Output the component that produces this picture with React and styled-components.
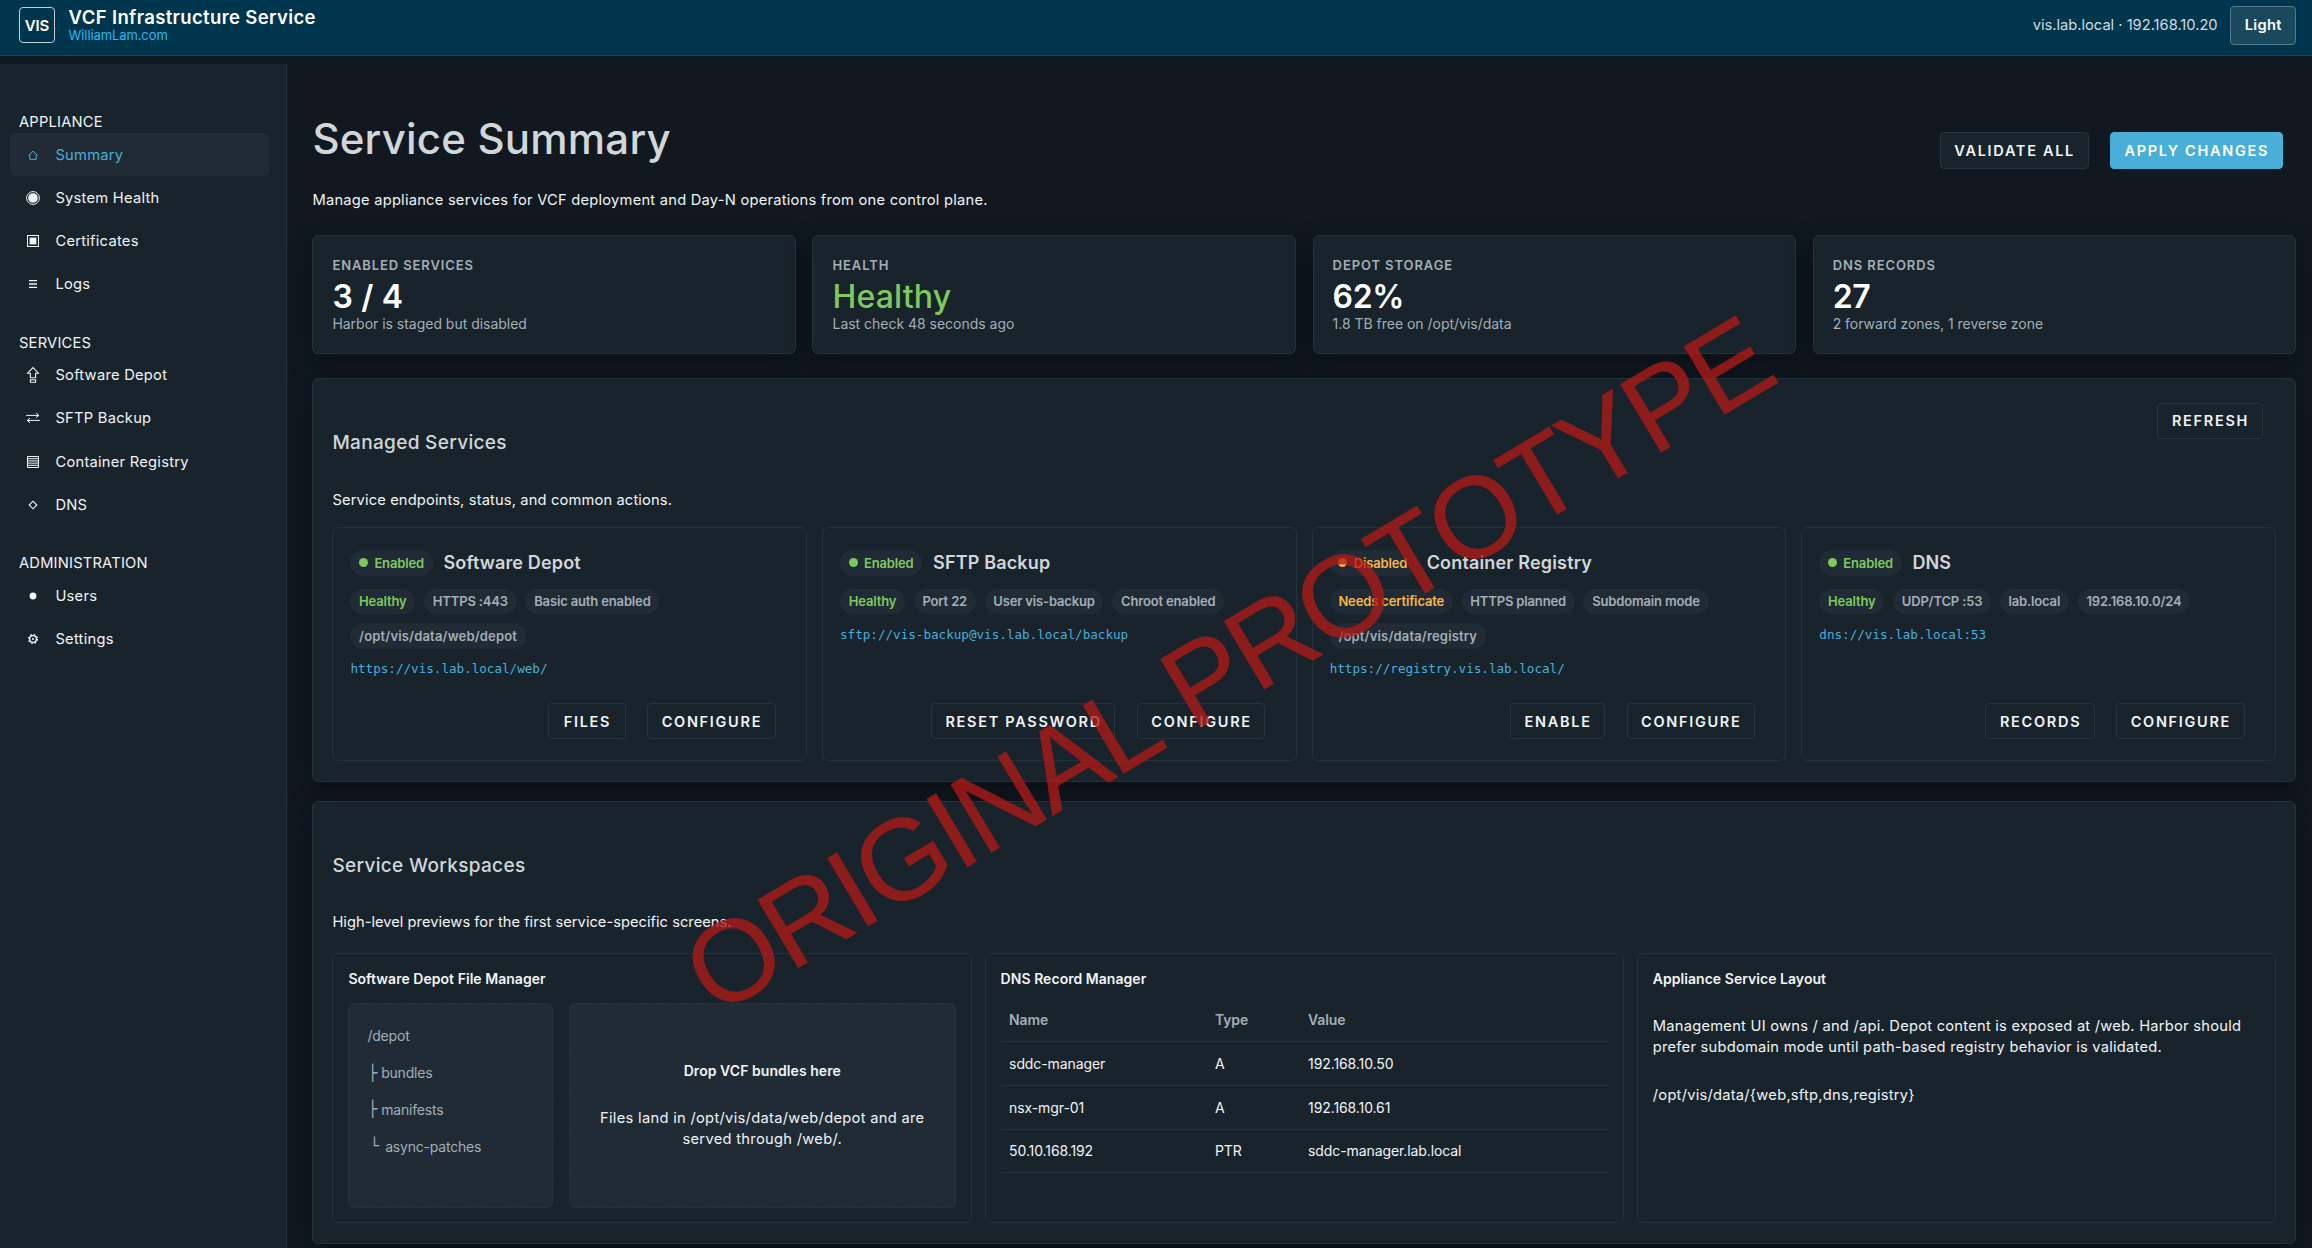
import React from 'react';
import styled, { createGlobalStyle } from 'styled-components';

const c = {
  bg: '#11181f',
  header: '#00364d',
  surface: '#19232c',
  raised: '#202b36',
  line: '#22313b',
  text: '#f1f4f5',
  heading: '#d1d6d9',
  muted: '#a3aeb7',
  blue: '#49afd9',
  green: '#7dc95e',
  amber: '#f7b744',
};

const GlobalStyle = createGlobalStyle`
  * { box-sizing: border-box; }
  body {
    margin: 0;
    background: ${c.bg};
    color: ${c.text};
    font-family: Inter, "Open Sans", sans-serif;
    font-size: 14.7px;
    letter-spacing: 0.2px;
  }
  h1, h2, h3, h4, p { margin: 0; }
`;

const Page = styled.div`
  position: relative;
  width: 2312px;
  height: 1248px;
  overflow: hidden;
  background: ${c.bg};
`;

/* Header */
const Header = styled.header`
  height: 56px;
  padding: 6px 16px 0 19px;
  display: flex;
  justify-content: space-between;
  align-items: flex-start;
  background: ${c.header};
  border-bottom: 1px solid #1a4560;
`;
const HeaderGroup = styled.div`
  display: flex;
  align-items: center;
  gap: ${(p) => p.$gap}px;
  height: 38.5px;
`;
const Logo = styled.div`
  width: 36px;
  height: 36px;
  border: 1.5px solid #c3cdd3;
  border-radius: 4px;
  display: grid;
  place-items: center;
  font-size: 15px;
  font-weight: 600;
  letter-spacing: -0.1px;
  color: #fff;
`;
const BrandName = styled.div`
  font-size: 18.5px;
  line-height: 20px;
  font-weight: 600;
  letter-spacing: 0.36px;
  color: #fff;
`;
const BrandLink = styled.div`
  font-size: 13px;
  line-height: 16px;
  letter-spacing: -0.1px;
  color: #29b6ef;
`;
const Host = styled.span`
  color: #d3dbe0;
  letter-spacing: -0.01px;
`;
const ThemeButton = styled.button`
  height: 38.5px;
  width: 65.7px;
  padding: 0;
  border: 1px solid #55798a;
  border-radius: 4px;
  background: #1a495e;
  color: #fff;
  font: 600 14.7px Inter, sans-serif;
  letter-spacing: 0.3px;
`;

/* Shell */
const Body = styled.div`
  display: flex;
  height: 1192px;
`;
const Sidebar = styled.nav`
  width: 287px;
  flex: none;
  margin-top: 8px;
  padding: 47px 17px 0 10px;
  background: ${c.surface};
  border-right: 1px solid #26343e;
  display: flex;
  flex-direction: column;
  gap: 25.8px;
`;
const NavLabel = styled.div`
  line-height: 22px;
  padding-left: 9px;
`;
const NavItem = styled.div`
  height: 43.2px;
  display: flex;
  align-items: center;
  gap: 13.4px;
  padding-left: 14px;
  border-radius: 5px;
  letter-spacing: 0.26px;
  color: ${(p) => (p.$active ? c.blue : c.text)};
  background: ${(p) => (p.$active ? c.raised : 'transparent')};
`;
const Glyph = styled.svg`
  width: 18px;
  height: 18px;
  flex: none;
  fill: none;
  stroke: currentColor;
  stroke-width: 1;
`;
const Main = styled.main`
  flex: 1;
  padding: 58px 16px 0 25.4px;
  display: flex;
  flex-direction: column;
`;

/* Page heading */
const PageHead = styled.div`
  display: flex;
  justify-content: space-between;
  align-items: flex-start;
`;
const PageTitle = styled.h1`
  font-size: 42px;
  line-height: 50px;
  font-weight: 450;
  letter-spacing: 0.2px;
  color: ${c.heading};
`;
const PageLead = styled.p`
  margin: 25.3px 0 23.7px;
  line-height: 22px;
  letter-spacing: 0.235px;
`;
const Actions = styled.div`
  display: flex;
  gap: 21.4px;
  justify-content: flex-end;
  margin-top: ${(p) => p.$top || 'auto'};
  margin-right: 13.4px;
`;
const Button = styled.button`
  height: 36.5px;
  min-width: 77.7px;
  padding: 0 12.5px 0 13.5px;
  border: 1px solid ${(p) => (p.$primary ? c.blue : '#26343e')};
  border-radius: 4px;
  background: ${(p) => (p.$primary ? c.blue : c.surface)};
  color: ${(p) => (p.$primary ? '#fff' : c.text)};
  font: 600 14.5px Inter, sans-serif;
  letter-spacing: 1.7px;
  white-space: nowrap;
`;

/* Stats */
const Surface = styled.section`
  background: ${c.surface};
  border: 1px solid ${c.line};
  border-radius: 6px;
  box-shadow: 0 8px 24px rgba(4, 6, 14, 0.45);
`;
const Stats = styled.div`
  display: grid;
  grid-template-columns: repeat(4, 1fr);
  gap: 16.8px;
`;
const Stat = styled(Surface)`
  height: 119.4px;
  padding: 21.2px 19px 0;
`;
const StatLabel = styled.div`
  font-size: 13px;
  line-height: 16px;
  font-weight: 600;
  letter-spacing: 0.9px;
  color: ${c.muted};
`;
const StatValue = styled.div`
  margin-top: 8px;
  font-size: 32px;
  line-height: 32px;
  font-weight: ${(p) => (p.$good ? 500 : 600)};
  letter-spacing: ${(p) => (p.$good ? 0.15 : -0.4)}px;
  word-spacing: ${(p) => (p.$good ? 0 : 1.2)}px;
  color: ${(p) => (p.$good ? c.green : '#fff')};
`;
const StatNote = styled.div`
  font-size: 14px;
  line-height: 20px;
  margin-top: 0.6px;
  letter-spacing: -0.02px;
  color: ${c.muted};
`;

/* Panels */
const Panel = styled(Surface)`
  margin-top: ${(p) => p.$top}px;
  padding: 0 19px 20px;
`;
const PanelHead = styled.div`
  display: flex;
  justify-content: space-between;
  align-items: flex-start;
  padding-bottom: ${(p) => p.$bottom}px;
`;
const PanelTitle = styled.h2`
  padding-top: 52.4px;
  font-size: 19px;
  line-height: 24px;
  font-weight: 500;
  letter-spacing: 0.33px;
  color: ${c.heading};
`;
const PanelLead = styled.p`
  margin-top: 33.3px;
  line-height: 22px;
  letter-spacing: ${(p) => (p.$tight ? '0.02px' : '0.14px')};
`;
const Grid = styled.div`
  display: grid;
  grid-template-columns: repeat(${(p) => p.$cols}, 1fr);
  gap: ${(p) => p.$gap}px;
`;

/* Service cards */
const Service = styled.article`
  height: 234px;
  padding: 21.3px 17px 21px;
  border: 1px solid ${c.line};
  border-radius: 6px;
  display: flex;
  flex-direction: column;
`;
const ServiceHead = styled.div`
  display: flex;
  align-items: center;
  gap: 10.8px;
  margin-bottom: 13px;
`;
const ServiceName = styled.h3`
  font-size: 18px;
  line-height: 26px;
  font-weight: 600;
  letter-spacing: 0.16px;
  color: ${c.heading};
`;
const tones = { good: c.green, warn: c.amber };
const Pill = styled.span`
  display: inline-flex;
  align-items: center;
  height: ${(p) => (p.$status ? 26 : 25.7)}px;
  padding: 0 8.7px;
  border-radius: 13px;
  background: ${c.raised};
  color: ${(p) => tones[p.$tone] || c.muted};
  font-size: 13px;
  font-weight: 600;
  letter-spacing: ${(p) => (p.$path ? 0.17 : -0.15)}px;
`;
const Dot = styled.i`
  width: 9px;
  height: 9px;
  margin-right: 6.3px;
  border-radius: 50%;
  background: currentColor;
`;
const Pills = styled.div`
  display: flex;
  flex-wrap: wrap;
  gap: 8.8px;
`;
const Endpoint = styled.a`
  margin-top: 10.4px;
  font: 12.6px/20px "DejaVu Sans Mono", monospace;
  letter-spacing: 0;
  color: ${c.blue};
`;

/* Workspaces */
const Workspace = styled.article`
  height: 270.4px;
  padding: 16px 15px 0;
  border: 1px solid ${c.line};
  border-radius: 6px;
`;
const WorkspaceTitle = styled.h4`
  font-size: 14px;
  line-height: 18px;
  font-weight: 600;
  letter-spacing: 0.04px;
`;
const FileManager = styled.div`
  display: grid;
  grid-template-columns: 204.5px 1fr;
  gap: 16px;
  height: 205.4px;
  margin-top: 15px;
`;
const Well = styled.div`
  border: 1px dashed #273540;
  border-radius: 6px;
  background: ${c.raised};
`;
const Tree = styled(Well)`
  padding: 14px 18px 0;
  font-size: 14px;
  letter-spacing: -0.2px;
  color: ${c.muted};
`;
const TreeRow = styled.div`
  height: 36.7px;
  display: flex;
  align-items: center;
  padding-left: ${(p) => p.$indent || 0}px;
`;
const Branch = styled.span`
  width: ${(p) => p.$w}px;
  font: 15.5px "DejaVu Sans Mono", monospace;
`;
const DropZone = styled(Well)`
  display: flex;
  flex-direction: column;
  align-items: center;
  justify-content: center;
  gap: 26px;
  padding: 0 24px;
  text-align: center;
  line-height: 21.5px;
  letter-spacing: 0.3px;
`;
const DropTitle = styled.strong`
  font-size: 14px;
  font-weight: 600;
  letter-spacing: 0.05px;
`;
const Table = styled.table`
  width: 607px;
  margin-top: 10.2px;
  border-collapse: collapse;
  table-layout: fixed;
  font-size: 14px;
  letter-spacing: -0.1px;
  th, td {
    height: 43.75px;
    padding: 0 8.5px;
    text-align: left;
    border-bottom: 1px solid ${c.line};
  }
  th { font-weight: 600; color: ${c.muted}; }
  th:nth-child(1) { width: 205.8px; }
  th:nth-child(2) { width: 93.2px; }
`;
const Note = styled.p`
  margin-top: ${(p) => p.$top}px;
  line-height: 21.7px;
  letter-spacing: 0.24px;
`;

const Watermark = styled.div`
  position: absolute;
  left: 716px;
  top: 919.8px;
  transform-origin: 0 97.3px;
  transform: rotate(-30.86deg);
  font: 115px/1 "Liberation Sans", Arial, sans-serif;
  font-kerning: none;
  letter-spacing: -2.85px;
  white-space: nowrap;
  color: #b01b17;
  -webkit-text-stroke: 0.5px #b01b17;
  opacity: 0.77;
  pointer-events: none;
`;

const icons = {
  home: <path d="M4.6 9.4 9 5.2l4.4 4.2M5.8 8.6v4.7h6.4V8.6" />,
  health: <><circle cx="9" cy="9" r="6.4" /><circle cx="9" cy="9" r="4.8" fill="currentColor" stroke="none" /></>,
  cert: <><rect x="3.5" y="3.5" width="11" height="11" /><rect x="5.6" y="5.6" width="6.8" height="6.8" fill="currentColor" stroke="none" /></>,
  logs: <path d="M5 5.6h8M5 9h8M5 12.4h8" strokeWidth="1.4" />,
  upload: <path d="M9 1.6 14.4 7.2h-2.8v4.6H6.4V7.2H3.6zM6.4 13.8h5.2v2.4H6.4z" strokeWidth="1.1" />,
  swap: <path d="M2.2 6.4h12.6M12 3.9l2.8 2.5L12 8.6M15.8 11.4H3.2M6 9.2l-2.8 2.2L6 13.8" />,
  registry: <path d="M3.5 3.5h11v11h-11zM4 5.7h10M4 7.9h10M4 10.1h10M4 12.3h10" />,
  diamond: <path d="M9 5.2 12.8 9 9 12.8 5.2 9z" strokeWidth="1.1" />,
  user: <circle cx="9" cy="9" r="3.4" fill="currentColor" stroke="none" />,
  gear: <><circle cx="9" cy="9" r="3.4" strokeWidth="1.4" /><circle cx="9" cy="9" r="4.5" strokeWidth="1.1" strokeDasharray="1.77 1.77" /><circle cx="9" cy="9" r="1.1" fill="currentColor" stroke="none" /></>,
};

const nav = [
  ['APPLIANCE', [['home', 'Summary', true], ['health', 'System Health'], ['cert', 'Certificates'], ['logs', 'Logs']]],
  ['SERVICES', [['upload', 'Software Depot'], ['swap', 'SFTP Backup'], ['registry', 'Container Registry'], ['diamond', 'DNS']]],
  ['ADMINISTRATION', [['user', 'Users'], ['gear', 'Settings']]],
];

const stats = [
  ['ENABLED SERVICES', '3 / 4', 'Harbor is staged but disabled'],
  ['HEALTH', 'Healthy', 'Last check 48 seconds ago', true],
  ['DEPOT STORAGE', '62%', '1.8 TB free on /opt/vis/data'],
  ['DNS RECORDS', '27', '2 forward zones, 1 reverse zone'],
];

const services = [
  { name: 'Software Depot', on: true, health: 'Healthy', tags: ['HTTPS :443', 'Basic auth enabled', '/opt/vis/data/web/depot'], url: 'https://vis.lab.local/web/', action: 'FILES' },
  { name: 'SFTP Backup', on: true, health: 'Healthy', tags: ['Port 22', 'User vis-backup', 'Chroot enabled'], url: 'sftp://vis-backup@vis.lab.local/backup', action: 'RESET PASSWORD' },
  { name: 'Container Registry', on: false, health: 'Needs certificate', tags: ['HTTPS planned', 'Subdomain mode', '/opt/vis/data/registry'], url: 'https://registry.vis.lab.local/', action: 'ENABLE' },
  { name: 'DNS', on: true, health: 'Healthy', tags: ['UDP/TCP :53', 'lab.local', '192.168.10.0/24'], url: 'dns://vis.lab.local:53', action: 'RECORDS' },
];

const records = [
  ['sddc-manager', 'A', '192.168.10.50'],
  ['nsx-mgr-01', 'A', '192.168.10.61'],
  ['50.10.168.192', 'PTR', 'sddc-manager.lab.local'],
];

function ServiceCard({ name, on, health, tags, url, action }) {
  const tone = on ? 'good' : 'warn';
  return (
    <Service>
      <ServiceHead>
        <Pill $status $tone={tone}><Dot />{on ? 'Enabled' : 'Disabled'}</Pill>
        <ServiceName>{name}</ServiceName>
      </ServiceHead>
      <Pills>
        <Pill $tone={tone}>{health}</Pill>
        {tags.map((t) => <Pill key={t} $path={t.startsWith('/')}>{t}</Pill>)}
      </Pills>
      <Endpoint>{url}</Endpoint>
      <Actions>
        <Button>{action}</Button>
        <Button>CONFIGURE</Button>
      </Actions>
    </Service>
  );
}

export default function App() {
  return (
    <Page>
      <GlobalStyle />
      <Header>
        <HeaderGroup $gap={13.6}>
          <Logo>VIS</Logo>
          <div>
            <BrandName>VCF Infrastructure Service</BrandName>
            <BrandLink>WilliamLam.com</BrandLink>
          </div>
        </HeaderGroup>
        <HeaderGroup $gap={12.7}>
          <Host>vis.lab.local · 192.168.10.20</Host>
          <ThemeButton>Light</ThemeButton>
        </HeaderGroup>
      </Header>
      <Body>
        <Sidebar>
          {nav.map(([label, items]) => (
            <div key={label}>
              <NavLabel>{label}</NavLabel>
              {items.map(([icon, text, active]) => (
                <NavItem key={text} $active={active}>
                  <Glyph viewBox="0 0 18 18">{icons[icon]}</Glyph>
                  {text}
                </NavItem>
              ))}
            </div>
          ))}
        </Sidebar>
        <Main>
          <PageHead>
            <div>
              <PageTitle>Service Summary</PageTitle>
              <PageLead>Manage appliance services for VCF deployment and Day-N operations from one control plane.</PageLead>
            </div>
            <Actions $top="18.3px">
              <Button>VALIDATE ALL</Button>
              <Button $primary>APPLY CHANGES</Button>
            </Actions>
          </PageHead>
          <Stats>
            {stats.map(([label, value, note, good]) => (
              <Stat key={label}>
                <StatLabel>{label}</StatLabel>
                <StatValue $good={good}>{value}</StatValue>
                <StatNote>{note}</StatNote>
              </Stat>
            ))}
          </Stats>
          <Panel $top={23.6}>
            <PanelHead $bottom={16.7}>
              <div>
                <PanelTitle>Managed Services</PanelTitle>
                <PanelLead>Service endpoints, status, and common actions.</PanelLead>
              </div>
              <Actions $top="23.7px"><Button>REFRESH</Button></Actions>
            </PanelHead>
            <Grid $cols={4} $gap={15}>
              {services.map((s) => <ServiceCard key={s.name} {...s} />)}
            </Grid>
          </Panel>
          <Panel $top={18.3}>
            <PanelHead $bottom={19.3}>
              <div>
                <PanelTitle>Service Workspaces</PanelTitle>
                <PanelLead $tight>High-level previews for the first service-specific screens.</PanelLead>
              </div>
            </PanelHead>
            <Grid $cols={3} $gap={13}>
              <Workspace>
                <WorkspaceTitle>Software Depot File Manager</WorkspaceTitle>
                <FileManager>
                  <Tree>
                    <TreeRow>/depot</TreeRow>
                    <TreeRow $indent={0.6}><Branch $w={13.2}>├</Branch>bundles</TreeRow>
                    <TreeRow $indent={0.6}><Branch $w={13.2}>├</Branch>manifests</TreeRow>
                    <TreeRow $indent={2.4}><Branch $w={15.4}>└</Branch>async-patches</TreeRow>
                  </Tree>
                  <DropZone>
                    <DropTitle>Drop VCF bundles here</DropTitle>
                    <p>Files land in /opt/vis/data/web/depot and are served through /web/.</p>
                  </DropZone>
                </FileManager>
              </Workspace>
              <Workspace>
                <WorkspaceTitle>DNS Record Manager</WorkspaceTitle>
                <Table>
                  <thead><tr><th>Name</th><th>Type</th><th>Value</th></tr></thead>
                  <tbody>
                    {records.map((r) => (
                      <tr key={r[0]}>{r.map((v) => <td key={v}>{v}</td>)}</tr>
                    ))}
                  </tbody>
                </Table>
              </Workspace>
              <Workspace>
                <WorkspaceTitle>Appliance Service Layout</WorkspaceTitle>
                <Note $top={28}>Management UI owns / and /api. Depot content is exposed at /web. Harbor should prefer subdomain mode until path-based registry behavior is validated.</Note>
                <Note $top={25.6}>{'/opt/vis/data/{web,sftp,dns,registry}'}</Note>
              </Workspace>
            </Grid>
          </Panel>
        </Main>
      </Body>
      <Watermark>ORIGINAL PROTOTYPE</Watermark>
    </Page>
  );
}
